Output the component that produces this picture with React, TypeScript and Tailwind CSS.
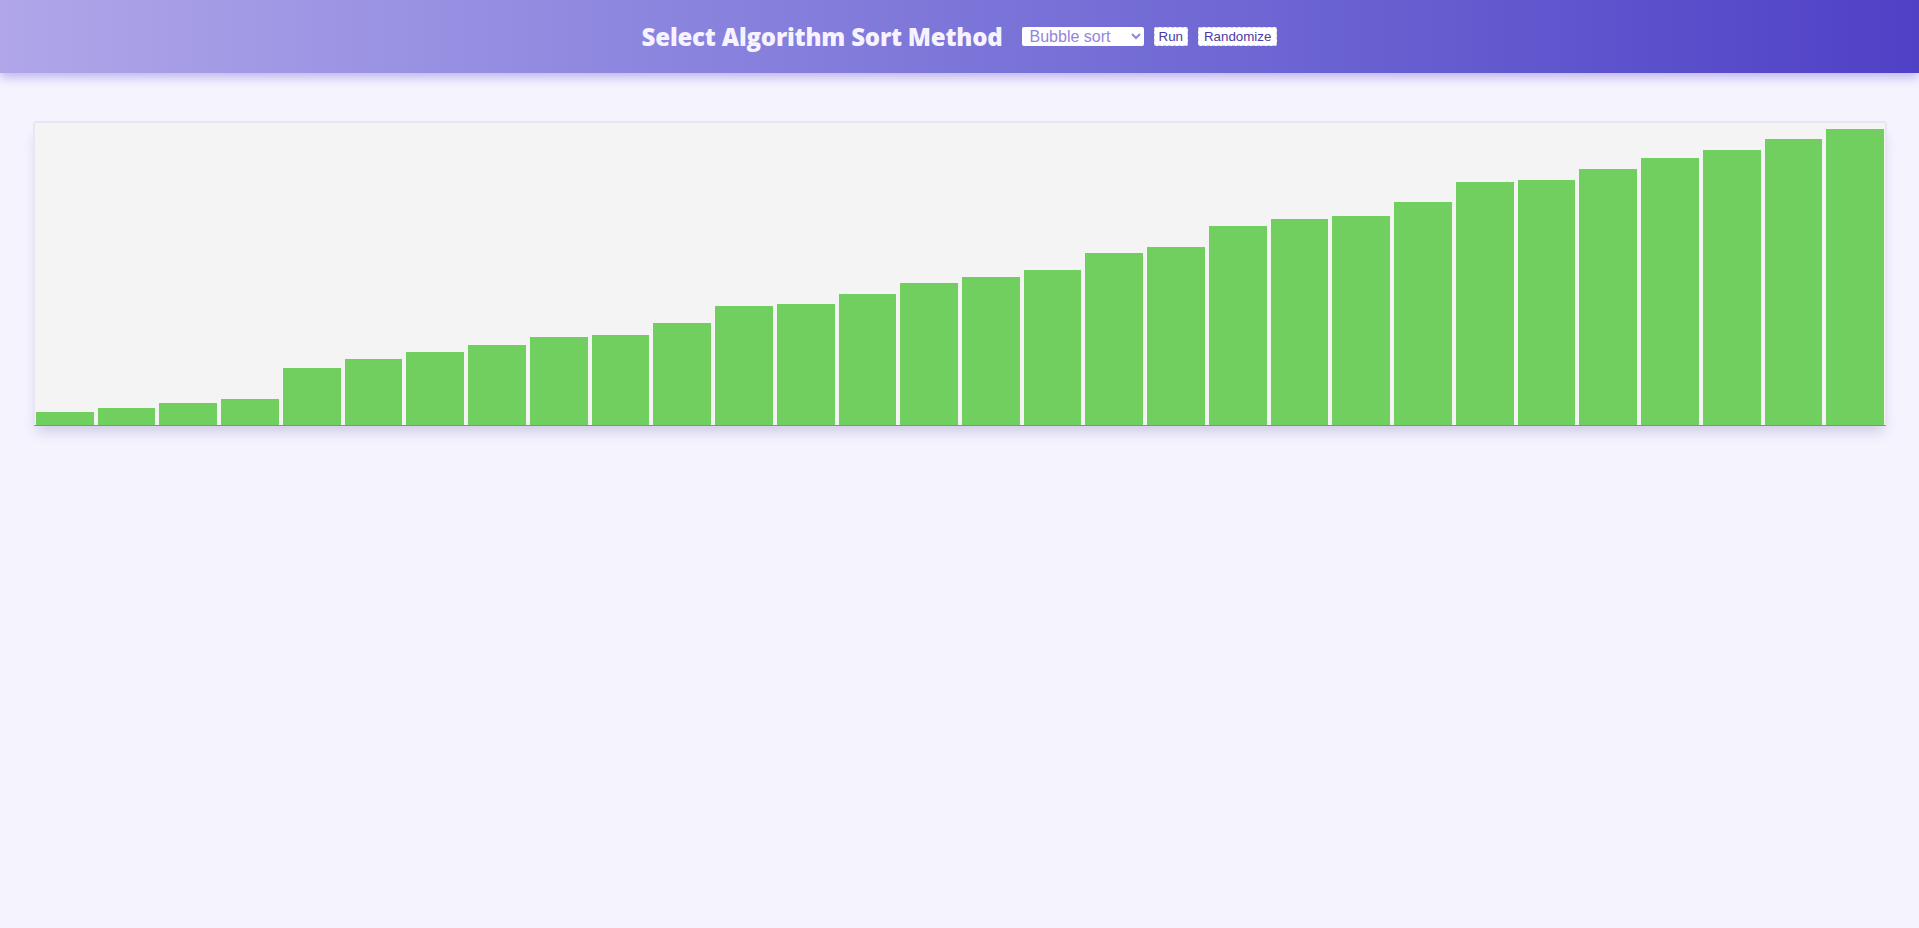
import React, { useState } from 'react';

const INITIAL_BARS = [
  13, 17, 22, 26, 57, 66, 73, 80, 88, 90, 102, 119, 121, 131, 142, 148, 155, 172, 178, 199, 206, 209,
  223, 243, 245, 256, 267, 275, 286, 296,
];

const App: React.FC = () => {
  const [method, setMethod] = useState('bubble');
  const [bars] = useState<number[]>(INITIAL_BARS);

  return (
    <div className="min-h-screen bg-[#f5f3fe] font-['Liberation_Sans',Arial,sans-serif]">
      {/* Header */}
      <header className="h-[73px] flex items-center justify-center bg-gradient-to-r from-[#b0a6e9] to-[#5040c6] shadow-[0_4px_10px_rgba(100,80,210,0.4)]">
        <h1 className="mr-[19px] text-[24px] leading-none font-extrabold text-[#f6f2ff] tracking-[-0.2px] font-['Open_Sans',sans-serif]">
          Select Algorithm Sort Method
        </h1>
        <select
          value={method}
          onChange={(e) => setMethod(e.target.value)}
          className="h-[19px] w-[122px] pl-[4px] bg-white rounded-[2px] text-[16px] leading-none text-[#9484e0] font-['Liberation_Sans',Arial,sans-serif]"
        >
          <option value="bubble">Bubble sort</option>
          <option value="selection">Selection sort</option>
          <option value="insertion">Insertion sort</option>
          <option value="merge">Merge sort</option>
          <option value="quick">Quick sort</option>
        </select>
        <button className="ml-[10px] h-[19px] px-[4px] bg-white border border-dashed border-[#d4d0e4] rounded-[2px] text-[13.33px] leading-none font-normal text-[#4b3aa8]">
          Run
        </button>
        <button className="ml-[10px] h-[19px] px-[5px] bg-white border border-dashed border-[#d4d0e4] rounded-[2px] text-[13.33px] leading-none font-normal text-[#4b3aa8]">
          Randomize
        </button>
      </header>

      {/* Bars panel */}
      <div className="mt-[48px] ml-[33px] mr-[32px] bg-[#f4f4f4] border-2 border-b border-[#e8e6f0] border-b-[#8b7ae0] rounded-t-[3px] shadow-[0_10px_12px_-4px_rgba(60,50,130,0.2)]">
        <div className="h-[302px] flex items-end gap-[4px] px-px">
          {bars.map((h, i) => (
            <div key={i} className="flex-1 bg-[#71cf5f]" style={{ height: h }} />
          ))}
        </div>
      </div>
    </div>
  );
};

export default App;
